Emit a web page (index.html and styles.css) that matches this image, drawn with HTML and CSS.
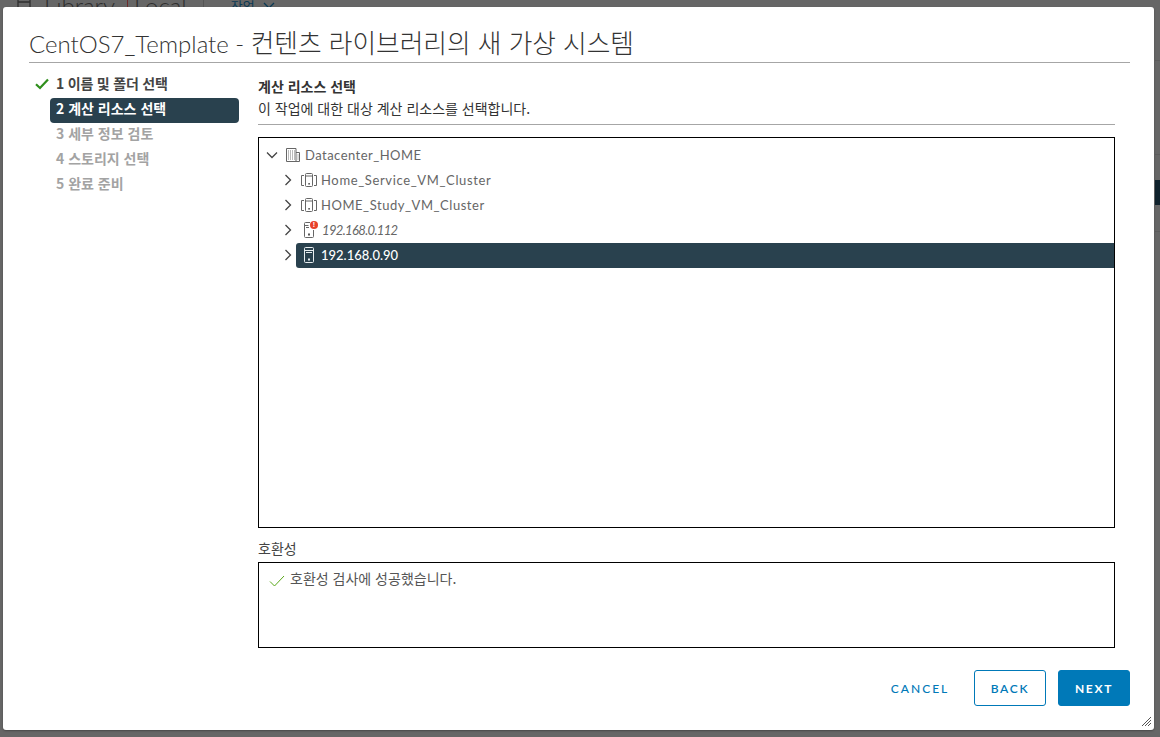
FILE: index.html
```html
<!DOCTYPE html>
<html lang="ko">
<head>
<meta charset="utf-8">
<title>CentOS7_Template</title>
<link rel="stylesheet" href="styles.css">
</head>
<body>
<div class="backdrop">
  <div class="bg-top">
    <svg class="bg-icon" width="14" height="12" viewBox="0 0 14 12"><path d="M1 0v10h12V0M1 4h12" fill="none" stroke="#2e2e2e" stroke-width="1.3"/></svg>
    <span class="bg-lib">Library</span><span class="bg-bar"></span><span class="bg-lib">Local</span><span class="bg-sep"></span><span class="bg-act">작업</span>
    <svg class="bg-chev" width="12" height="8" viewBox="0 0 12 8"><path d="M1 1l5 5 5-5" fill="none" stroke="#0b3a55" stroke-width="1.3"/></svg>
  </div>
  <div class="bg-strip">
    <div class="bg-rule first"></div>
    <div class="bg-rule second"></div>
    <div class="bg-cell"></div>
    <div class="bg-rule third"></div>
  </div>
</div>
<main class="modal">
  <header class="modal-head">
    <h1 class="modal-title">CentOS7_Template - <span class="title-ko">컨텐츠 라이브러리의 새 가상 시스템</span></h1>
  </header>
  <div class="modal-body">
    <nav class="steps">
      <div class="step done">
        <svg class="step-check" width="14" height="12" viewBox="0 0 14 12"><path d="M1 6.200l4 3.800 8-8.600" fill="none" stroke="#2f8f1c" stroke-width="2.200"/></svg>
        <span>1 이름 및 폴더 선택</span>
      </div>
      <div class="step active">2 계산 리소스 선택</div>
      <div class="step todo">3 세부 정보 검토</div>
      <div class="step todo">4 스토리지 선택</div>
      <div class="step todo">5 완료 준비</div>
    </nav>
    <section class="content">
      <div class="intro">
        <h2 class="intro-title">계산 리소스 선택</h2>
        <p class="intro-text">이 작업에 대한 대상 계산 리소스를 선택합니다.</p>
      </div>
      <div class="tree">
        <div class="row level0">
          <svg class="caret" width="12" height="12" viewBox="0 0 12 12"><path d="M1 3.500l5 5 5-5" fill="none" stroke="#444" stroke-width="1.300"/></svg>
          <svg class="ico" width="16" height="16" viewBox="0 0 16 16"><path d="M1.500 14.500V1.500h9.500v13M11 5.500h3.500v9h-13" fill="none" stroke="#666"/><path d="M3 4h1M5 4h1M7 4h1M9 4h1M3 6h1M5 6h1M7 6h1M9 6h1M3 8h1M5 8h1M7 8h1M9 8h1M3 10h1M5 10h1M7 10h1M9 10h1M3 12h1M5 12h1M7 12h1M9 12h1M12.500 8h1M12.500 10h1M12.500 12h1" stroke="#777"/></svg>
          <span class="label">Datacenter_HOME</span>
        </div>
        <div class="row level1">
          <svg class="caret" width="12" height="12" viewBox="0 0 12 12"><path d="M3.500 1l5 5-5 5" fill="none" stroke="#444" stroke-width="1.300"/></svg>
          <svg class="ico" width="16" height="16" viewBox="0 0 16 16"><path d="M3 3.500H.5v10H3M13 3.500h2.500v10H13" fill="none" stroke="#666"/><rect x="4.500" y="1.500" width="7" height="13" rx="1" fill="none" stroke="#666"/><path d="M4.500 4h7" stroke="#666"/><rect x="7.300" y="11" width="1.600" height="1.600" fill="#555"/></svg>
          <span class="label wide">Home_Service_VM_Cluster</span>
        </div>
        <div class="row level1">
          <svg class="caret" width="12" height="12" viewBox="0 0 12 12"><path d="M3.500 1l5 5-5 5" fill="none" stroke="#444" stroke-width="1.300"/></svg>
          <svg class="ico" width="16" height="16" viewBox="0 0 16 16"><path d="M3 3.500H.5v10H3M13 3.500h2.500v10H13" fill="none" stroke="#666"/><rect x="4.500" y="1.500" width="7" height="13" rx="1" fill="none" stroke="#666"/><path d="M4.500 4h7" stroke="#666"/><rect x="7.300" y="11" width="1.600" height="1.600" fill="#555"/></svg>
          <span class="label wide narrower">HOME_Study_VM_Cluster</span>
        </div>
        <div class="row level1">
          <svg class="caret" width="12" height="12" viewBox="0 0 12 12"><path d="M3.500 1l5 5-5 5" fill="none" stroke="#444" stroke-width="1.300"/></svg>
          <span class="ico host-alert">
            <svg width="16" height="16" viewBox="0 0 16 16"><path d="M9 .5H4.500a1 1 0 0 0-1 1v13a1 1 0 0 0 1 1h7a1 1 0 0 0 1-1V8M3.500 3.500h4M5 5.500h3" fill="none" stroke="#666"/><rect x="7" y="11.500" width="2" height="2" fill="#555"/></svg>
            <span class="alert-dot">!</span>
          </span>
          <span class="label italic">192.168.0.112</span>
        </div>
        <div class="row level1 selected-row">
          <svg class="caret" width="12" height="12" viewBox="0 0 12 12"><path d="M3.500 1l5 5-5 5" fill="none" stroke="#444" stroke-width="1.300"/></svg>
          <div class="selected">
            <svg class="ico-sel" width="16" height="16" viewBox="0 0 16 16"><rect x="3.500" y="0.500" width="9" height="15" rx="1" fill="none" stroke="#e8eef1"/><path d="M3.500 3.500h9M5 5.500h6" stroke="#e8eef1"/><rect x="7" y="11.500" width="2" height="2" fill="#e8eef1"/></svg>
            <span class="label-sel">192.168.0.90</span>
          </div>
        </div>
      </div>
      <div class="compat-label">호환성</div>
      <div class="compat">
        <svg class="compat-check" width="16" height="12" viewBox="0 0 16 12"><path d="M1 6.500l4.500 4.500L15 1" fill="none" stroke="#5aa81a" stroke-width="1"/></svg>
        <span>호환성 검사에 성공했습니다.</span>
      </div>
    </section>
  </div>
  <footer class="modal-foot">
    <button class="btn link" type="button">CANCEL</button>
    <button class="btn outline" type="button">BACK</button>
    <button class="btn primary" type="button">NEXT</button>
  </footer>
  <svg class="resize" width="9" height="9" viewBox="0 0 9 9"><path d="M0 9L9 0M3 9L9 3M6 9L9 6" stroke="#555" stroke-width="1"/></svg>
</main>
</body>
</html>
```

FILE: styles.css
```css
* { box-sizing: border-box; }
html, body { margin: 0; height: 100%; }
body {
  position: relative;
  width: 1160px;
  height: 737px;
  overflow: hidden;
  background: #666;
  font-family: "Noto Sans CJK KR", "Noto Sans", sans-serif;
  color: #333;
}
.backdrop { position: absolute; inset: 0; }
.bg-top {
  position: absolute;
  left: 17px;
  top: -2px;
  height: 16px;
  display: flex;
  align-items: center;
  color: #2e2e2e;
  overflow: hidden;
}
.bg-icon { margin-right: 13px; align-self: flex-start; margin-top: 0; }
.bg-lib { font: 300 24px/16px "Lato", sans-serif; color: #2e2e2e; }
.bg-bar { width: 1px; height: 16px; background: #6e2c2c; margin: 0 6px 0 12px; }
.bg-sep { width: 1px; height: 16px; background: #555; margin: 0 27px 0 16px; }
.bg-act { font-size: 13px; line-height: 16px; color: #0b3a55; }
.bg-chev { margin-left: 8px; }
.bg-strip { position: absolute; left: 1155px; top: 0; width: 5px; height: 737px; }
.bg-rule { position: absolute; left: 0; width: 5px; height: 1px; background: #5c5c5c; }
.bg-rule.first { top: 60px; }
.bg-rule.second { top: 154px; }
.bg-rule.third { top: 231px; }
.bg-cell { position: absolute; left: 0; top: 180px; width: 5px; height: 25px; background: #10222c; }
.modal {
  position: absolute;
  left: 3px;
  top: 7px;
  width: 1151px;
  height: 723px;
  background: #fff;
  border-radius: 3px;
  display: flex;
  flex-direction: column;
  box-shadow: 0 1px 2px rgba(0,0,0,.3);
}
.modal-head { margin: 0 24px 0 26px; height: 56px; border-bottom: 1px solid #a6a6a6; flex: none; }
.modal-title {
  margin: 0;
  padding-top: 17px;
  font-family: "Lato", "Noto Sans CJK KR", sans-serif;
  font-size: 24px;
  line-height: 36px;
  font-weight: 300;
  color: #333;
  white-space: nowrap;
}
.title-ko { font-family: "Noto Sans CJK KR", sans-serif; font-size: 25.7px; font-weight: 300; }
.modal-body { flex: 1; display: flex; min-height: 0; padding-top: 8px; }
.steps { width: 255px; padding-left: 32px; padding-top: 2px; flex: none; }
.step {
  height: 25px;
  line-height: 21px;
  font-size: 14px;
  font-weight: 700;
  padding-left: 21px;
  white-space: nowrap;
}
.step.done { position: relative; color: #444; letter-spacing: -0.2px; }
.step-check { position: absolute; left: 0; top: 5px; }
.step.active {
  margin-left: 15px;
  width: 189px;
  padding-left: 6px;
  background: #29414e;
  color: #fff;
  border-radius: 4px;
}
.step.todo { color: #a3a3a3; }
.content { flex: 1; display: flex; flex-direction: column; padding-right: 39px; }
.intro { height: 54px; border-bottom: 1px solid #a6a6a6; padding-top: 3px; margin-bottom: 12px; flex: none; }
.intro-title { margin: 0; font-size: 14px; line-height: 24px; font-weight: 700; color: #333; }
.intro-text { margin: 0; font-size: 14px; line-height: 20px; color: #333; }
.tree {
  height: 391px;
  border: 1px solid #000;
  padding-top: 4px;
  flex: none;
}
.row {
  height: 25px;
  display: flex;
  align-items: center;
  font-family: "Lato", "Noto Sans", sans-serif;
  font-size: 13px;
  color: #666;
  white-space: nowrap;
}
.row.level0 { padding-left: 7px; }
.row.level0 .ico { margin-left: 7px; margin-right: 4px; }
.row.level1 { padding-left: 23px; }
.row.level1 .ico { margin-left: 7px; margin-right: 4px; }
.label { letter-spacing: 0.47px; }
.label.wide { letter-spacing: 0.64px; }
.label.narrower { letter-spacing: 0.55px; }
.label.italic { font-style: italic; letter-spacing: -0.65px; margin-left: 1px; }
.host-alert { position: relative; display: inline-block; width: 16px; height: 16px; }
.alert-dot {
  position: absolute;
  right: -1px;
  top: -1px;
  width: 8px;
  height: 8px;
  border-radius: 50%;
  background: #e8412a;
  color: #fff;
  font: 700 7px/8px "Liberation Sans", sans-serif;
  text-align: center;
}
.selected-row { align-items: flex-start; padding-top: 1px; }
.selected-row .caret { margin-top: 6px; }
.selected {
  flex: 1;
  margin-left: 2px;
  height: 25px;
  display: flex;
  align-items: center;
  padding: 0 0 2px 5px;
  background: #29414e;
  color: #fff;
  border-radius: 3px 0 0 3px;
}
.ico-sel { margin-right: 4px; }
.label-sel { font-weight: 500; }
.compat-label { font-size: 14px; line-height: 18px; margin-top: 11px; color: #444; flex: none; }
.compat {
  margin-top: 5px;
  height: 86px;
  flex: none;
  border: 1px solid #000;
  padding: 5px 0 0 10px;
  font-size: 14px;
  line-height: 20px;
  color: #555;
  display: flex;
  align-items: flex-start;
  gap: 5px;
}
.compat-check { margin-top: 7px; flex: none; }
.modal-foot {
  height: 60px;
  flex: none;
  display: flex;
  justify-content: flex-end;
  align-items: flex-start;
  gap: 12px;
  padding-right: 24px;
}
.btn {
  height: 36px;
  font-family: "Lato", sans-serif;
  font-size: 12px;
  font-weight: 600;
  letter-spacing: 1.7px;
  border-radius: 3px;
  padding: 0;
  cursor: pointer;
}
.btn.link { width: 80px; background: none; border: 0; color: #0079b8; margin-right: 2px; font-weight: 500; letter-spacing: 2px; }
.btn.outline { width: 72px; background: #fff; border: 1px solid #0079b8; color: #0079b8; }
.btn.primary { width: 72px; background: #0079b8; border: 1px solid #0079b8; color: #fff; font-weight: 700; }
.resize { position: absolute; right: 3px; bottom: 4px; }
```
